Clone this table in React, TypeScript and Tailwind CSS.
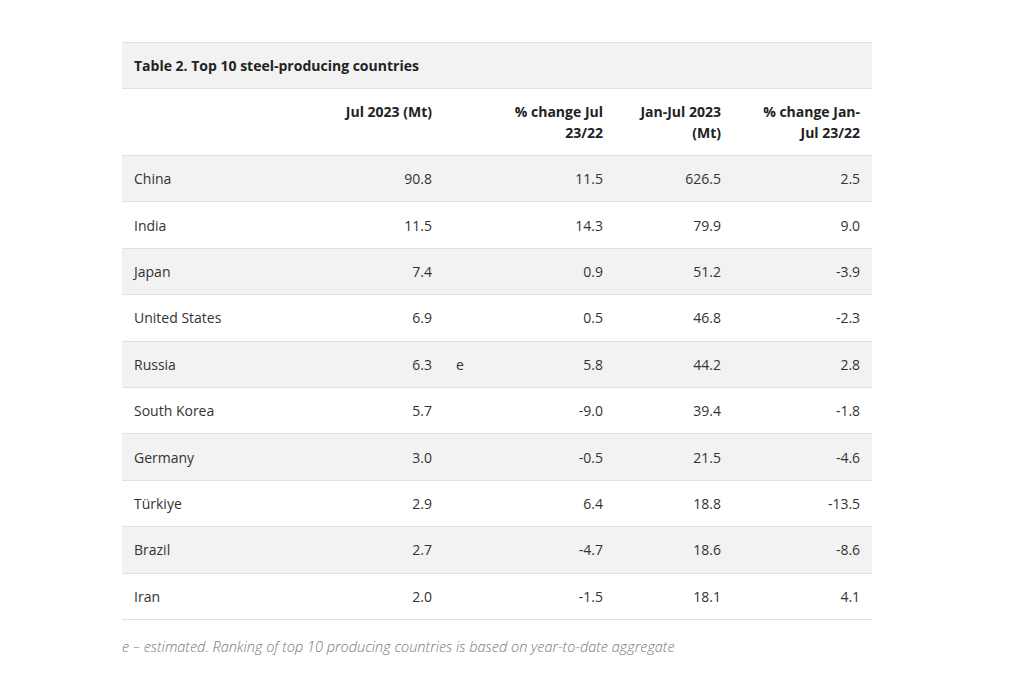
const rows: [string, string, string, string, string, string][] = [
  ["China", "90.8", "", "11.5", "626.5", "2.5"],
  ["India", "11.5", "", "14.3", "79.9", "9.0"],
  ["Japan", "7.4", "", "0.9", "51.2", "-3.9"],
  ["United States", "6.9", "", "0.5", "46.8", "-2.3"],
  ["Russia", "6.3", "e", "5.8", "44.2", "2.8"],
  ["South Korea", "5.7", "", "-9.0", "39.4", "-1.8"],
  ["Germany", "3.0", "", "-0.5", "21.5", "-4.6"],
  ["Türkiye", "2.9", "", "6.4", "18.8", "-13.5"],
  ["Brazil", "2.7", "", "-4.7", "18.6", "-8.6"],
  ["Iran", "2.0", "", "-1.5", "18.1", "4.1"],
];

export default function App() {
  return (
    <div
      className="min-h-[673px] bg-white pt-[42px] pl-[122px] text-[14px] text-[#333]"
      style={{ fontFamily: '"Open Sans", sans-serif' }}
    >
      <table className="w-[750px] table-fixed border-collapse">
        <colgroup>
          <col className="w-[198px]" />
          <col className="w-[124px]" />
          <col className="w-[34px]" />
          <col className="w-[137px]" />
          <col className="w-[118px]" />
          <col className="w-[139px]" />
        </colgroup>
        <thead>
          <tr className="bg-[#f2f2f2] border-t border-b border-[#e0e0e0]">
            <th
              colSpan={6}
              className="h-[46px] px-3 text-left font-bold text-[#222] leading-[21px]"
            >
              Table 2. Top 10 steel-producing countries
            </th>
          </tr>
          <tr className="border-b border-[#e0e0e0] align-top font-bold text-[#222] leading-[21px]">
            <th className="px-3 pt-[12px] pb-[12px]"></th>
            <th className="px-3 pt-[12px] pb-[12px] text-right">Jul 2023 (Mt)</th>
            <th className="px-3 pt-[12px] pb-[12px]"></th>
            <th className="px-3 pt-[12px] pb-[12px] text-right">% change Jul 23/22</th>
            <th className="px-3 pt-[12px] pb-[12px] text-right">Jan-Jul 2023 (Mt)</th>
            <th className="pl-[26px] pr-3 pt-[12px] pb-[12px] text-right">
              % change Jan-Jul 23/22
            </th>
          </tr>
        </thead>
        <tbody>
          {rows.map((r, i) => (
            <tr
              key={r[0]}
              className={`h-[46.4px] border-b border-[#e0e0e0] leading-[21px] ${
                i % 2 === 0 ? "bg-[#f2f2f2]" : "bg-white"
              }`}
            >
              <td className="px-3">{r[0]}</td>
              <td className="px-3 text-right">{r[1]}</td>
              <td className="px-3">{r[2]}</td>
              <td className="px-3 text-right">{r[3]}</td>
              <td className="px-3 text-right">{r[4]}</td>
              <td className="px-3 text-right">{r[5]}</td>
            </tr>
          ))}
        </tbody>
      </table>
      <p className="mt-[16px] italic font-light text-[14.5px] text-[#777] leading-[22px]">
        e – estimated. Ranking of top 10 producing countries is based on year-to-date aggregate
      </p>
    </div>
  );
}
